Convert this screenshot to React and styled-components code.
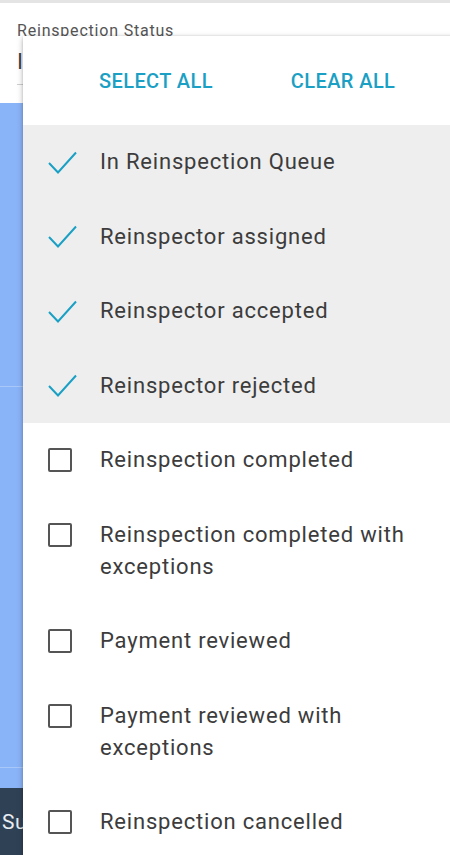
import React from "react";
import styled, { createGlobalStyle } from "styled-components";

const Global = createGlobalStyle`
  html, body { margin: 0; padding: 0; background: #fff; }
  body { font-family: Roboto, "Noto Sans", sans-serif; overflow: hidden; }
  * { box-sizing: border-box; }
`;

const Page = styled.div`
  position: relative;
  width: 450px;
  height: 855px;
  overflow: hidden;
  display: flex;
  flex-direction: column;
`;

const TopStrip = styled.div`
  height: 3px;
  background: #e4e4e4;
  flex: none;
`;

const FieldArea = styled.div`
  height: 100px;
  flex: none;
  background: #fff;
  padding: 18px 0 0 17px;
`;

const FieldLabel = styled.div`
  font-size: 16px;
  letter-spacing: 0.8px;
  color: #555;
  line-height: 20px;
  white-space: nowrap;
`;

const FieldValue = styled.div`
  margin-top: 6px;
  width: 8px;
  overflow: hidden;
  font-size: 22px;
  letter-spacing: 0.8px;
  line-height: 30px;
  color: #444;
  white-space: nowrap;
  height: 38px;
  border-bottom: 1px solid #cfcfcf;
`;

const BlueArea = styled.div`
  flex: 1;
  background: #8ab4f8;
  display: flex;
  flex-direction: column;
`;

const BlueRow = styled.div`
  height: ${(p) => p.$h}px;
  flex: none;
  border-bottom: 1px solid #a9c8fa;
`;

const DarkBar = styled.div`
  height: 67px;
  flex: none;
  background: #2f4255;
  color: #e8edf2;
  font-size: 21px;
  letter-spacing: 0.6px;
  display: flex;
  align-items: center;
  padding-left: 2px;
`;

const Menu = styled.div`
  position: absolute;
  left: 23px;
  top: 36px;
  width: 440px;
  bottom: -20px;
  background: #fff;
  box-shadow: 0 2px 6px rgba(0, 0, 0, 0.28), 0 0 2px rgba(0, 0, 0, 0.12);
`;

const MenuHeader = styled.div`
  height: 89px;
  display: flex;
  align-items: center;
  padding-left: 76px;
  gap: 78px;
`;

const TextButton = styled.button`
  border: none;
  background: none;
  padding: 0;
  font-family: Roboto, "Noto Sans", sans-serif;
  font-weight: 500;
  font-size: 20px;
  letter-spacing: 0.4px;
  color: #1aa0c4;
  text-transform: uppercase;
  cursor: pointer;
`;

const Option = styled.div`
  display: flex;
  align-items: flex-start;
  padding: 21.25px 14px 21.25px 25px;
  background: ${(p) => (p.$selected ? "#eeeeee" : "#ffffff")};
`;

const IconSlot = styled.div`
  width: 52px;
  height: 32px;
  flex: none;
  display: flex;
  align-items: center;
`;

const Box = styled.div`
  width: 24px;
  height: 24px;
  border: 2px solid #555;
  border-radius: 2px;
`;

const OptionText = styled.div`
  font-size: 22px;
  letter-spacing: 0.8px;
  line-height: 32px;
  color: #3c3c3c;
  flex: 1;
`;

const Check = () => (
  <svg width="29" height="23" viewBox="0 0 29 23">
    <path d="M1 12 L10 21.5 L28 1.5" fill="none" stroke="#1aa0c4" strokeWidth="2" />
  </svg>
);

const options = [
  ["In Reinspection Queue", true],
  ["Reinspector assigned", true],
  ["Reinspector accepted", true],
  ["Reinspector rejected", true],
  ["Reinspection completed", false],
  ["Reinspection completed with exceptions", false],
  ["Payment reviewed", false],
  ["Payment reviewed with exceptions", false],
  ["Reinspection cancelled", false],
];

export default function App() {
  return (
    <>
      <Global />
      <Page>
        <TopStrip />
        <FieldArea>
          <FieldLabel>Reinspection Status</FieldLabel>
          <FieldValue>In Reinspection Queue, Reinspector assigned</FieldValue>
        </FieldArea>
        <BlueArea>
          <BlueRow $h={284} />
          <BlueRow $h={381} />
        </BlueArea>
        <DarkBar>Submit</DarkBar>
        <Menu>
          <MenuHeader>
            <TextButton>Select All</TextButton>
            <TextButton>Clear All</TextButton>
          </MenuHeader>
          {options.map(([label, sel]) => (
            <Option key={label} $selected={sel}>
              <IconSlot>{sel ? <Check /> : <Box />}</IconSlot>
              <OptionText>{label}</OptionText>
            </Option>
          ))}
        </Menu>
      </Page>
    </>
  );
}
